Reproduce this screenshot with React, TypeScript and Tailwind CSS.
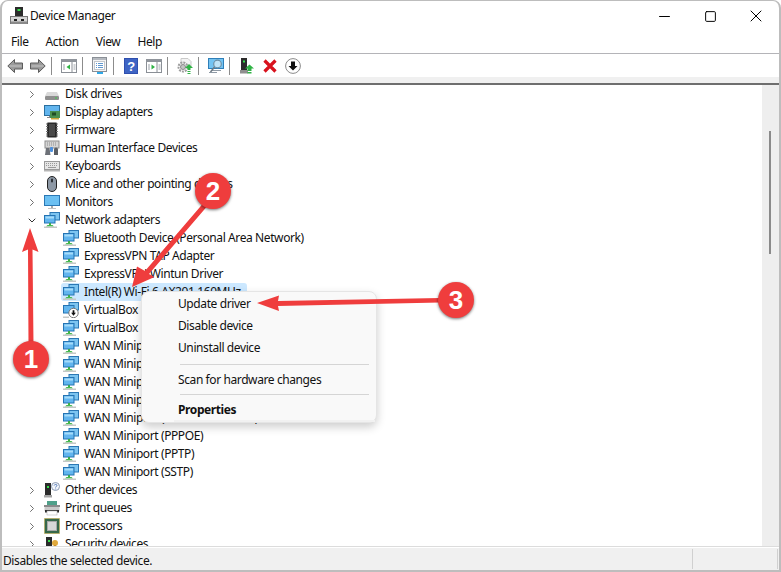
import { ReactNode } from "react";
import { ChevronDown, ChevronRight, Minus, Square, X } from "lucide-react";

const NetIcon = () => (
  <svg viewBox="0 0 16 16" className="w-4 h-4 shrink-0">
    <rect x="6" y="0.5" width="9.5" height="7.5" fill="#7cc4f0" stroke="#2b78b5" />
    <rect x="0.5" y="3.5" width="10.5" height="7.5" fill="#62b5ee" stroke="#2474b4" />
    <rect x="1.5" y="4.5" width="8.5" height="2" fill="#a6dcf9" />
    <path d="M5 11h2v2H5z" fill="#3fae49" />
    <path d="M3.5 13h5l1.5 1.5H2z" fill="#45b94f" />
    <path d="M0 14.5h13V16H0z" fill="#c5c8c6" />
  </svg>
);

const VBoxIcon = () => (
  <svg viewBox="0 0 16 16" className="w-4 h-4 shrink-0">
    <rect x="6" y="0.5" width="9.5" height="7.5" fill="#7cc4f0" stroke="#2b78b5" />
    <rect x="0.5" y="3.5" width="10.5" height="7.5" fill="#62b5ee" stroke="#2474b4" />
    <path d="M0 14.5h6V16H0z" fill="#c5c8c6" />
    <circle cx="10.5" cy="11" r="4.7" fill="#fff" stroke="#777" />
    <path d="M9.6 8.2h1.8v2.6h1.5l-2.4 3-2.4-3h1.5z" fill="#111" />
  </svg>
);

const DiskIcon = () => (
  <svg viewBox="0 0 16 16" className="w-4 h-4 shrink-0">
    <path d="M3 6h10l2 4H1z" fill="#d9d9d9" />
    <rect x="1" y="10" width="14" height="4" rx="1" fill="#8f8f8f" />
    <rect x="11" y="11.500" width="2" height="1" fill="#3dd04a" />
  </svg>
);

const DisplayIcon = () => (
  <svg viewBox="0 0 16 16" className="w-4 h-4 shrink-0">
    <rect x="0.500" y="1.500" width="15" height="10" fill="#62b5ee" stroke="#2b6f9f" />
    <path d="M5 12h3v2H3v-1h2z" fill="#8a8a8a" />
    <rect x="6" y="7" width="10" height="7" fill="#4a8f4e" />
    <rect x="8" y="8.500" width="4" height="3" fill="#1f4d25" />
    <path d="M7 14h8v1.500H7z" fill="#c9a53c" />
  </svg>
);

const ChipIcon = () => (
  <svg viewBox="0 0 16 16" className="w-4 h-4 shrink-0">
    <rect x="3" y="0.500" width="10" height="15" rx="1" fill="#2a2a2a" />
    <path d="M2 2h2M2 4.500h2M2 7h2M2 9.500h2M2 12h2M2 14h2M12 2h2M12 4.500h2M12 7h2M12 9.500h2M12 12h2M12 14h2" stroke="#777" strokeWidth="1" />
    <rect x="5" y="2" width="6" height="12" fill="#4a4a4a" />
  </svg>
);

const HidIcon = () => (
  <svg viewBox="0 0 16 16" className="w-4 h-4 shrink-0">
    <rect x="1" y="1" width="14" height="7" fill="#d5d5d5" stroke="#8d8d8d" />
    <path d="M3 3h10M3 5h10" stroke="#8d8d8d" strokeDasharray="1 1" />
    <path d="M1 15l1-7h3.500l1 7z" fill="#6d7178" />
    <rect x="6" y="7" width="3" height="5" rx="1" fill="#4d90dd" />
    <path d="M10 15V9.500a2 2 0 0 1 4 0V15z" fill="#5a5e64" />
  </svg>
);

const KeyboardIcon = () => (
  <svg viewBox="0 0 16 16" className="w-4 h-4 shrink-0">
    <rect x="0.500" y="3.500" width="15" height="8" fill="#e6e6e6" stroke="#9a9a9a" />
    <path d="M2 5.500h12M2 7.500h12" stroke="#9a9a9a" strokeDasharray="1 1" />
    <path d="M4 9.500h8" stroke="#9a9a9a" />
    <path d="M0 12h16v1.500H0z" fill="#b5b5b5" />
  </svg>
);

const MouseIcon = () => (
  <svg viewBox="0 0 16 16" className="w-4 h-4 shrink-0">
    <rect x="3.500" y="0.500" width="9" height="15" rx="4.500" fill="#8d98a5" stroke="#222" />
    <rect x="7" y="2.500" width="2" height="4" rx="1" fill="#2e3237" />
  </svg>
);

const MonitorIcon = () => (
  <svg viewBox="0 0 16 16" className="w-4 h-4 shrink-0">
    <rect x="0.500" y="1.500" width="15" height="10" fill="#6cc0f2" stroke="#2b78b5" />
    <path d="M7 12h2v2H7z" fill="#a9a9a9" />
    <path d="M4 14h8v1H4z" fill="#c2c2c2" />
  </svg>
);

const OtherIcon = () => (
  <svg viewBox="0 0 16 16" className="w-4 h-4 shrink-0">
    <path d="M1 1h6v12H1z" fill="#2b2b2b" />
    <rect x="3" y="4" width="2" height="2" fill="#35e04a" />
    <path d="M0 13h8v2.500H0z" fill="#a5a5a5" />
    <circle cx="11.500" cy="4.500" r="4" fill="#f3f6fb" stroke="#8e9db3" />
    <path d="M10.200 3.500c.3-1.500 2.700-1.500 2.700 0 0 1-1.300 1-1.300 2M11.600 6.600v.8" fill="none" stroke="#4f76b8" />
  </svg>
);

const PrintIcon = () => (
  <svg viewBox="0 0 16 16" className="w-4 h-4 shrink-0">
    <path d="M3 1h10v4H3z" fill="#4fa08a" />
    <rect x="0.500" y="5" width="15" height="6" fill="#c9c9c9" />
    <path d="M0 5h16v2H0z" fill="#8a8a8a" />
    <rect x="1" y="10" width="14" height="2.500" fill="#2c2c2c" />
    <rect x="3" y="11" width="10" height="4" fill="#fff" stroke="#aaa" strokeWidth="0.500" />
  </svg>
);

const CpuIcon = () => (
  <svg viewBox="0 0 16 16" className="w-4 h-4 shrink-0">
    <rect x="0.500" y="0.500" width="15" height="15" fill="#36684a" stroke="#c9a93f" strokeDasharray="1 1" />
    <rect x="1.500" y="1.500" width="13" height="13" fill="#36684a" />
    <rect x="3.500" y="3.500" width="9" height="9" fill="#d8d8d8" stroke="#a9a9a9" />
  </svg>
);

const SecurityIcon = () => (
  <svg viewBox="0 0 16 16" className="w-4 h-4 shrink-0">
    <path d="M2 1h6v12H2z" fill="#2b2b2b" />
    <rect x="4" y="4" width="2" height="2" fill="#35e04a" />
    <circle cx="11" cy="7" r="3" fill="#e0a93c" />
    <path d="M10 9h2v4h-2z" fill="#c98f25" />
  </svg>
);

const AppIcon = () => (
  <svg viewBox="0 0 18 18" className="w-[18px] h-[18px] shrink-0">
    <path d="M5 0h8v9H5z" fill="#2b2b2b" />
    <rect x="7.500" y="2" width="3" height="2" fill="#35e04a" />
    <rect x="0.500" y="9.500" width="17" height="7" fill="#d5d5d5" stroke="#777" />
    <path d="M1 14.500h16V17H1z" fill="#8a8a8a" />
    <rect x="4" y="12" width="3" height="2" fill="#222" />
    <rect x="11" y="12" width="3" height="2" fill="#222" />
  </svg>
);

const BackIcon = ({ flip }: { flip?: boolean }) => (
  <svg viewBox="0 0 16 14" className={flip ? "w-4 h-[14px] -scale-x-100" : "w-4 h-[14px]"}>
    <path d="M7.500 0.500v3.500H15.500v6H7.500v3.500L0.800 7z" fill="#9b9b9b" stroke="#5c5c5c" />
    <path d="M2.500 7h12" stroke="#c5c5c5" />
  </svg>
);

const PaneIcon = ({ arrow }: { arrow: "left" | "right" }) => (
  <svg viewBox="0 0 16 14" className="w-4 h-[14px]">
    <rect x="0.500" y="0.500" width="15" height="13" fill="#fff" stroke="#8a8f96" />
    <path d="M0 0h16v3H0z" fill="#8f949b" />
    <path d="M11 3v11" stroke="#8a8f96" />
    <path d="M2 6h2M2 8h2M2 10h2M12.500 6h2M12.500 8h2M12.500 10h2" stroke="#9aa0a8" />
    {arrow === "left" ? <path d="M9 5.500v5L5.500 8z" fill="#2fb344" /> : <path d="M5.500 5.500v5L9 8z" fill="#2fb344" />}
  </svg>
);

const PropsIcon = () => (
  <svg viewBox="0 0 16 17" className="w-4 h-[17px]">
    <rect x="0.500" y="0.500" width="14" height="14" fill="#f4f4f4" stroke="#8a8f96" />
    <path d="M1 1h13v2H1z" fill="#b5b9bf" />
    <rect x="2.500" y="4.500" width="10" height="8" fill="#fff" stroke="#c3c7cc" />
    <path d="M6 6.500h5M6 8.500h5M6 10.500h5" stroke="#5f97cf" />
    <path d="M4 6.500h1M4 8.500h1M4 10.500h1" stroke="#5f97cf" />
    <rect x="5" y="15" width="6" height="2" fill="#2fa8e8" />
  </svg>
);

const HelpIcon = () => (
  <svg viewBox="0 0 14 16" className="w-[14px] h-4">
    <rect width="14" height="16" fill="#2f4fae" />
    <path d="M1 1h12v14H1z" fill="#3e64c4" />
    <text x="7" y="13" textAnchor="middle" fontSize="13" fontWeight="700" fill="#fff" fontFamily="Liberation Sans, sans-serif">?</text>
  </svg>
);

const GearIcon = () => (
  <svg viewBox="0 0 16 16" className="w-4 h-4">
    <path d="M4 0.500h7l3 3V9H4z" fill="#f3f3f3" stroke="#c9c9c9" />
    <circle cx="6" cy="9" r="4.500" fill="none" stroke="#9c9c9c" strokeWidth="2" strokeDasharray="2 1" />
    <circle cx="6" cy="9" r="2.500" fill="#c4c4c4" stroke="#8a8a8a" />
    <path d="M12 6l4 4h-2.500v2h-3v-2H8z" fill="#2fb344" />
    <path d="M10.500 13h3v1h-3zM10.500 15h3v1h-3z" fill="#2fb344" />
  </svg>
);

const ScanIcon = () => (
  <svg viewBox="0 0 16 16" className="w-4 h-4">
    <rect x="0.500" y="0.500" width="15" height="10" fill="#73c3f2" stroke="#2f7fb9" />
    <path d="M3 12h10v1H3zM1 14h8v1H1z" fill="#8f9aa5" />
    <circle cx="9.500" cy="6" r="3.800" fill="#bfe3f7" stroke="#6e8ea3" strokeWidth="1.200" />
    <path d="M6.500 9L2.500 14" stroke="#6e7a85" strokeWidth="1.500" />
  </svg>
);

const UpdateIcon = () => (
  <svg viewBox="0 0 14 16" className="w-[14px] h-4">
    <path d="M1 0h6v12H1z" fill="#2b2b2b" />
    <rect x="3" y="2.500" width="2" height="2" fill="#35e04a" />
    <path d="M0 12h8v3.500H0z" fill="#8f8f8f" />
    <path d="M9.500 6.500l4.500 4h-2.500V13h-4v-2.500H5z" fill="#2fb344" />
    <path d="M7.500 14h4v1h-4zM7.500 15.500h4v.5h-4z" fill="#2fb344" />
  </svg>
);

const RedX = () => (
  <svg viewBox="0 0 14 14" className="w-[14px] h-[14px]">
    <path d="M1.500 1.500l11 11M12.500 1.500l-11 11" stroke="#d8121d" strokeWidth="3.200" />
  </svg>
);

const DownCircle = () => (
  <svg viewBox="0 0 16 16" className="w-4 h-4">
    <circle cx="8" cy="8" r="7.400" fill="#fff" stroke="#8b8b8b" />
    <path d="M6 3.500h4v4.500h2.500L8 12.500 3.500 8H6z" fill="#111" />
  </svg>
);

type Row = { icon: ReactNode; label: string; open?: boolean; child?: boolean; selected?: boolean };

const rows: Row[] = [
  { icon: <DiskIcon />, label: "Disk drives" },
  { icon: <DisplayIcon />, label: "Display adapters" },
  { icon: <ChipIcon />, label: "Firmware" },
  { icon: <HidIcon />, label: "Human Interface Devices" },
  { icon: <KeyboardIcon />, label: "Keyboards" },
  { icon: <MouseIcon />, label: "Mice and other pointing devices" },
  { icon: <MonitorIcon />, label: "Monitors" },
  { icon: <NetIcon />, label: "Network adapters", open: true },
  { icon: <NetIcon />, label: "Bluetooth Device (Personal Area Network)", child: true },
  { icon: <NetIcon />, label: "ExpressVPN TAP Adapter", child: true },
  { icon: <NetIcon />, label: "ExpressVPN Wintun Driver", child: true },
  { icon: <NetIcon />, label: "Intel(R) Wi-Fi 6 AX201 160MHz", child: true, selected: true },
  { icon: <VBoxIcon />, label: "VirtualBox Bridged Adapter", child: true },
  { icon: <NetIcon />, label: "VirtualBox Host-Only Adapter", child: true },
  { icon: <NetIcon />, label: "WAN Miniport (IKEv2)", child: true },
  { icon: <NetIcon />, label: "WAN Miniport (IP)", child: true },
  { icon: <NetIcon />, label: "WAN Miniport (IPv6)", child: true },
  { icon: <NetIcon />, label: "WAN Miniport (L2TP)", child: true },
  { icon: <NetIcon />, label: "WAN Miniport (Network Monitor)", child: true },
  { icon: <NetIcon />, label: "WAN Miniport (PPPOE)", child: true },
  { icon: <NetIcon />, label: "WAN Miniport (PPTP)", child: true },
  { icon: <NetIcon />, label: "WAN Miniport (SSTP)", child: true },
  { icon: <OtherIcon />, label: "Other devices" },
  { icon: <PrintIcon />, label: "Print queues" },
  { icon: <CpuIcon />, label: "Processors" },
  { icon: <SecurityIcon />, label: "Security devices" },
];

const TreeRow = ({ row }: { row: Row }) => {
  if (row.child) {
    return (
      <div className="h-[18px] flex items-center pl-[59px]">
        <div className={row.selected ? "h-[18px] flex items-center pl-[2px] pr-[6px] rounded-[3px] bg-[#cce8ff]" : "h-[18px] flex items-center px-[2px]"}>
          {row.icon}
          <span className="ml-[5px] whitespace-nowrap">{row.label}</span>
        </div>
      </div>
    );
  }
  return (
    <div className="h-[18px] flex items-center pl-[24px]">
      <span className="w-[12px] flex justify-center text-[#707070]">
        {row.open ? <ChevronDown size={15} strokeWidth={2} className="text-[#333]" /> : <ChevronRight size={15} strokeWidth={2} />}
      </span>
      <span className="ml-[6px]">{row.icon}</span>
      <span className="ml-[5px] whitespace-nowrap">{row.label}</span>
    </div>
  );
};

const ToolSep = () => <div className="w-px h-[18px] bg-[#8c8c8c] ml-[2px] mr-[5px]" />;
const Tool = ({ children }: { children: ReactNode }) => (
  <div className="w-[23px] h-[23px] flex items-center justify-center">{children}</div>
);

const Badge = ({ n, className }: { n: number; className: string }) => (
  <div
    className={`absolute w-[36px] h-[36px] rounded-full bg-[#ef3d3d] flex items-center justify-center text-white text-[26px] font-bold tracking-normal shadow-[0_1px_3px_rgba(0,0,0,0.55)] font-['Liberation_Sans',sans-serif] ${className}`}
  >
    {n}
  </div>
);

export default function App() {
  return (
    <div className="relative w-[781px] h-[572px] overflow-hidden bg-white flex flex-col text-[12px] tracking-[-0.4px] text-[#111] font-['Noto_Sans',sans-serif] border-x-2 border-t border-b-2 border-[#bdbdbd] rounded-t-[8px]">
      <div className="h-[30px] shrink-0 flex items-center pl-[8px]">
        <AppIcon />
        <span className="ml-[2px]">Device Manager</span>
        <div className="ml-auto flex items-center text-black">
          <div className="w-[46px] flex justify-center"><Minus size={17} strokeWidth={1.4} /></div>
          <div className="w-[46px] flex justify-center"><Square size={13} strokeWidth={1.8} /></div>
          <div className="w-[46px] flex justify-center"><X size={20} strokeWidth={1.2} /></div>
        </div>
      </div>
      <div className="h-[23px] shrink-0 flex items-center gap-[17px] pl-[9px] border-b border-[#b4b4b8]">
        <span>File</span>
        <span>Action</span>
        <span>View</span>
        <span>Help</span>
      </div>
      <div className="h-[23px] shrink-0 flex items-center pl-[1px]">
        <Tool><BackIcon /></Tool>
        <Tool><BackIcon flip /></Tool>
        <ToolSep />
        <Tool><PaneIcon arrow="left" /></Tool>
        <ToolSep />
        <Tool><PropsIcon /></Tool>
        <ToolSep />
        <Tool><HelpIcon /></Tool>
        <Tool><PaneIcon arrow="right" /></Tool>
        <ToolSep />
        <Tool><GearIcon /></Tool>
        <ToolSep />
        <Tool><ScanIcon /></Tool>
        <ToolSep />
        <Tool><UpdateIcon /></Tool>
        <Tool><RedX /></Tool>
        <Tool><DownCircle /></Tool>
      </div>
      <div className="h-[6px] shrink-0 bg-[#f0f0f0]" />
      <div className="flex-1 min-h-0 flex border-t-2 border-[#6e6e6e] overflow-hidden">
        <div className="flex-1 overflow-hidden">
          {rows.map((row) => (
            <TreeRow key={row.label} row={row} />
          ))}
        </div>
        <div className="w-[17px] shrink-0 bg-[#eeeeee] flex justify-start pl-[7px] pt-[46px]">
          <div className="w-[2px] h-[123px] bg-[#8a8a8a]" />
        </div>
      </div>
      <div className="h-[24px] shrink-0 border-t border-[#dcdcdc] bg-[#f0f0f0] flex items-center pl-[1px] shadow-[inset_0_1px_0_#ffffff]">
        <span className="pt-[5px]">Disables the selected device.</span>
        <div className="ml-auto w-px h-[20px] bg-[#d0d0d0]" />
        <div className="ml-[84px] mr-px w-px h-[20px] bg-[#d0d0d0]" />
      </div>

      {/* context menu */}
      <div className="absolute left-[139px] top-[290px] w-[236px] h-[132px] rounded-[8px] bg-[#f9f9f9] border border-[#e5e5e5] shadow-[0_4px_10px_rgba(0,0,0,0.2)] pl-[36px] pr-[7px] pt-[1px]">
        <div className="h-[22px] flex items-center">Update driver</div>
        <div className="h-[22px] flex items-center">Disable device</div>
        <div className="h-[22px] flex items-center">Uninstall device</div>
        <div className="h-px bg-[#d5d5d5] my-[5px] ml-[2px]" />
        <div className="h-[20px] flex items-center">Scan for hardware changes</div>
        <div className="h-px bg-[#d5d5d5] mt-[4px] mb-[5px] ml-[2px]" />
        <div className="h-[20px] flex items-center font-bold">Properties</div>
        <div className="h-[2px] bg-[#f1f1f1] -ml-[4px] -mr-[6px]" />
      </div>

      {/* annotation arrows, coordinates are the picture's own */}
      <svg className="absolute -left-[2px] -top-px" width="781" height="572" viewBox="0 0 781 572">
        <g fill="#ef3d3d">
          <path d="M30 228L38.500 252 32.500 249.500 33.500 345H28.500L28 249.500 22 252z" />
          <path d="M132 287L137 266.500 145 271 203 203.500 206.500 207 149 274 154.500 277z" />
          <path d="M257 303L279 295.500 278 301 440 298V302.500L278 306 279 311z" />
        </g>
      </svg>
      <Badge n={1} className="left-[11px] top-[340px]" />
      <Badge n={2} className="left-[193px] top-[172px]" />
      <Badge n={3} className="left-[436px] top-[281px]" />
    </div>
  );
}
